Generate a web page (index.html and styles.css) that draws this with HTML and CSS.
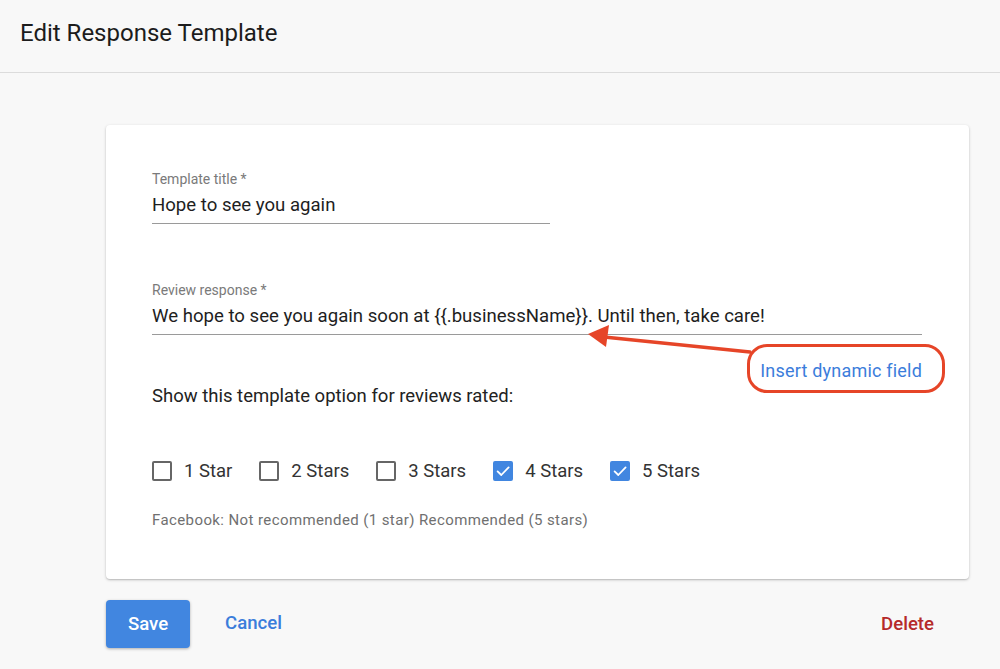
FILE: index.html
```html
<!DOCTYPE html>
<html>
<head>
<meta charset="utf-8">
<link rel="stylesheet" href="styles.css">
</head>
<body>
<header class="topbar"><h1 class="page-title">Edit Response Template</h1></header>
<main class="main">
  <section class="card">
    <div class="field field-title">
      <div class="field-label">Template title *</div>
      <div class="field-value">Hope to see you again</div>
    </div>
    <div class="field field-response">
      <div class="field-label">Review response *</div>
      <div class="field-value">We hope to see you again soon at {{.businessName}}. Until then, take care!</div>
    </div>
    <div class="insert-row"><a class="insert-link">Insert dynamic field</a></div>
    <p class="show-label">Show this template option for reviews rated:</p>
    <div class="stars">
      <label class="star"><span class="box"></span>1 Star</label>
      <label class="star"><span class="box"></span>2 Stars</label>
      <label class="star"><span class="box"></span>3 Stars</label>
      <label class="star"><span class="box checked"><svg viewBox="0 0 20 20" width="20" height="20"><path d="M4.6 10.4 L8.3 14 L15.6 6.4" fill="none" stroke="#fff" stroke-width="1.8" stroke-linecap="round" stroke-linejoin="round"/></svg></span>4 Stars</label>
      <label class="star"><span class="box checked"><svg viewBox="0 0 20 20" width="20" height="20"><path d="M4.6 10.4 L8.3 14 L15.6 6.4" fill="none" stroke="#fff" stroke-width="1.8" stroke-linecap="round" stroke-linejoin="round"/></svg></span>5 Stars</label>
    </div>
    <p class="note">Facebook: Not recommended (1 star) Recommended (5 stars)</p>
  </section>
  <div class="actions">
    <button class="btn-save">Save</button>
    <a class="btn-cancel">Cancel</a>
    <a class="btn-delete">Delete</a>
  </div>
</main>
<svg class="annotation" width="1000" height="669" viewBox="0 0 1000 669">
  <line x1="750" y1="352" x2="604" y2="337" stroke="#e64528" stroke-width="3.5" stroke-linecap="round"/>
  <polygon points="588,334 609,325 606,347" fill="#e64528"/>
</svg>
</body>
</html>
```
FILE: styles.css
```css
* { box-sizing: border-box; }
html, body { margin: 0; padding: 0; }
body {
  background: #f8f8f8;
  font-family: Roboto, "Noto Sans", "Liberation Sans", sans-serif;
  color: #222;
  width: 1000px;
  height: 669px;
  overflow: hidden;
  position: relative;
}
.topbar {
  height: 73px;
  border-bottom: 1px solid #dcdcdc;
  padding: 19px 0 0 20px;
}
.page-title {
  margin: 0;
  font-size: 24px;
  font-weight: 400;
  line-height: 28px;
  color: #1c1c1c;
}
.main {
  padding: 52px 31px 0 106px;
}
.card {
  background: #fff;
  border-radius: 4px;
  box-shadow: 0 1px 3px rgba(0,0,0,0.22), 0 1px 1px rgba(0,0,0,0.08);
  height: 454px;
  padding: 46px 47px 0 46px;
}
.field { display: flex; flex-direction: column; }
.field-label {
  font-size: 14px;
  line-height: 16px;
  color: #7a7a7a;
}
.field-value {
  font-size: 18.6px;
  line-height: 24px;
  padding: 6px 0 6px;
  border-bottom: 1px solid #9a9a9a;
  color: #1e1e1e;
  white-space: nowrap;
}
.field-title { width: 398px; }
.field-response { width: 770px; margin-top: 58px; }
.insert-row {
  width: 770px;
  display: flex;
  justify-content: flex-end;
  margin-top: 25px;
}
.insert-link {
  position: relative;
  font-size: 18px;
  line-height: 22px;
  color: #3b7ddb;
  letter-spacing: 0.2px;
}
.insert-link::after {
  content: "";
  box-sizing: border-box;
  position: absolute;
  left: -13px;
  top: -16px;
  width: 198px;
  height: 49px;
  border: 3px solid #e64528;
  border-radius: 20px;
}
.show-label {
  margin: 3px 0 0;
  font-size: 18.5px;
  line-height: 22px;
  color: #222;
}
.stars {
  display: flex;
  margin-top: 52px;
  height: 24px;
  align-items: center;
}
.star {
  display: flex;
  align-items: center;
  font-size: 18.5px;
  line-height: 22px;
  color: #333;
  margin-right: 27px;
}
.box {
  width: 20px;
  height: 20px;
  border: 2px solid #666;
  border-radius: 2px;
  margin-right: 12px;
  display: inline-flex;
}
.box.checked {
  background: #4186e0;
  border-color: #4186e0;
}
.box.checked svg { margin: -2px; }
.note {
  margin: 28px 0 0;
  font-size: 15px;
  line-height: 18px;
  letter-spacing: 0.4px;
  color: #707070;
}
.actions {
  display: flex;
  align-items: center;
  margin-top: 21px;
}
.btn-save {
  width: 84px;
  height: 48px;
  border: none;
  border-radius: 4px;
  background: #4186e0;
  color: #fff;
  font-family: Roboto, "Noto Sans", sans-serif;
  font-size: 18.6px;
  font-weight: 500;
  box-shadow: 0 1px 3px rgba(0,0,0,0.3);
  padding: 0;
}
.btn-cancel {
  margin-left: 35px;
  font-size: 18.6px;
  font-weight: 500;
  color: #3b7ddb;
  margin-top: -3px;
}
.btn-delete {
  margin-left: auto;
  font-size: 18.6px;
  font-weight: 500;
  color: #b52a2a;
  margin-right: 35px;
}
.annotation {
  position: absolute;
  left: 0;
  top: 0;
  pointer-events: none;
}
```
